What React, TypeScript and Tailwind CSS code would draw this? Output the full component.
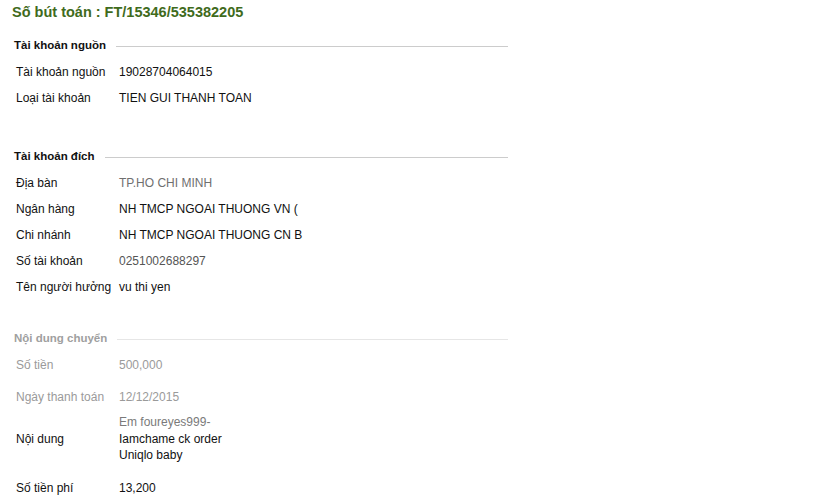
type RowProps = {
  label: string;
  value: React.ReactNode;
  muted?: boolean;
  className?: string;
};

function Row({ label, value, muted, className = "" }: RowProps) {
  return (
    <div className={`flex items-center min-h-[26px] ${className}`}>
      <div className={`w-[103px] shrink-0 ${muted ? "text-[#9a9a9a]" : "text-[#111]"}`}>{label}</div>
      <div className={muted ? "text-[#9a9a9a]" : "text-[#111]"}>{value}</div>
    </div>
  );
}

function SectionHead({
  title,
  muted,
  className = "",
}: {
  title: string;
  muted?: boolean;
  className?: string;
}) {
  return (
    <div className={`flex items-center h-[26px] w-[494px] -ml-[2px] ${className}`}>
      <span className={`font-bold text-[11.5px] ${muted ? "text-[#a0a0a0]" : "text-[#111]"}`}>{title}</span>
      <div className={`flex-1 ml-[10px] h-px ${muted ? "bg-[#e6e6e6]" : "bg-[#cccccc]"}`} />
    </div>
  );
}

export default function App() {
  return (
    <div className="w-[819px] h-[504px] bg-white overflow-hidden font-['Liberation_Sans',Arial,sans-serif] text-[12px]">
      <div className="h-[26px] pl-[12px] flex items-center">
        <h1 className="text-[14.5px] font-bold text-[#3f6b1c]">Số bút toán : FT/15346/535382205</h1>
      </div>

      <div className="pl-[16px]">
        <SectionHead title="Tài khoản nguồn" className="mt-[7px]" />
        <Row label="Tài khoản nguồn" value="19028704064015" />
        <Row label="Loại tài khoản" value="TIEN GUI THANH TOAN" />

        <SectionHead title="Tài khoản đích" className="mt-[33px]" />
        <Row label="Địa bàn" value={<span className="text-[#6f6f6f]">TP.HO CHI MINH</span>} />
        <Row label="Ngân hàng" value="NH TMCP NGOAI THUONG VN (" />
        <Row label="Chi nhánh" value="NH TMCP NGOAI THUONG CN B" />
        <Row label="Số tài khoản" value={<span className="text-[#555]">0251002688297</span>} />
        <Row label="Tên người hưởng" value="vu thi yen" />

        <SectionHead title="Nội dung chuyển" muted className="mt-[26px]" />
        <Row label="Số tiền" value="500,000" muted />
        <Row label="Ngày thanh toán" value="12/12/2015" muted className="mt-[6px]" />
        <Row
          label="Nội dung"
          className="mt-[4px]"
          value={
            <div className="leading-[16.5px]">
              <div className="text-[#7a7a7a]">Em foureyes999-</div>
              <div>Iamchame ck order</div>
              <div>Uniqlo baby</div>
            </div>
          }
        />
        <Row label="Số tiền phí" value="13,200" className="mt-[11px]" />
      </div>
    </div>
  );
}
